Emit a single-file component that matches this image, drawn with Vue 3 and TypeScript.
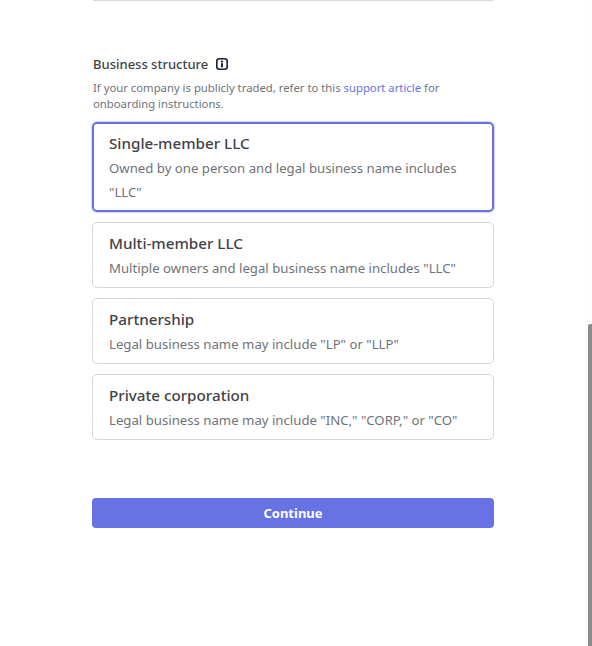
<script setup lang="ts">
interface Option { title: string; desc: string; selected?: boolean }
const options: Option[] = [
  { title: 'Single-member LLC', desc: 'Owned by one person and legal business name includes "LLC"', selected: true },
  { title: 'Multi-member LLC', desc: 'Multiple owners and legal business name includes "LLC"' },
  { title: 'Partnership', desc: 'Legal business name may include "LP" or "LLP"' },
  { title: 'Private corporation', desc: 'Legal business name may include "INC," "CORP," or "CO"' },
]
</script>

<template>
  <div class="page">
    <main class="form">
      <div class="rule"></div>
      <div class="label-row">
        <span class="label">Business structure</span>
        <svg class="info" width="12" height="12" viewBox="0 0 12 12" aria-hidden="true">
          <rect x="0.8" y="0.8" width="10.4" height="10.4" rx="2.5" fill="none" stroke="#1a1f36" stroke-width="1.6" />
          <rect x="5" y="2.6" width="2" height="1.8" fill="#1a1f36" />
          <rect x="5" y="5.2" width="2" height="4" fill="#1a1f36" />
        </svg>
      </div>
      <p class="help">If your company is publicly traded, refer to this <a class="link">support article</a> for onboarding instructions.</p>
      <div class="options">
        <div v-for="o in options" :key="o.title" class="option" :class="{ selected: o.selected }">
          <div class="title">{{ o.title }}</div>
          <div class="desc">{{ o.desc }}</div>
        </div>
      </div>
      <button class="continue" type="button">Continue</button>
    </main>
    <div class="track"><div class="thumb"></div></div>
  </div>
</template>

<style scoped>
.page {
  position: relative;
  width: 592px;
  height: 646px;
  overflow: hidden;
  background: #fff;
  font-family: "Noto Sans", "Open Sans", sans-serif;
}
.form {
  width: 402px;
  margin-left: 92px;
  display: flex;
  flex-direction: column;
}
.rule {
  height: 1px;
  margin: 0 1px;
  background: #d8d9dc;
}
.label-row {
  display: flex;
  align-items: center;
  gap: 8px;
  margin-top: 54px;
  height: 18px;
  padding-left: 1px;
}
.label {
  font-size: 13px;
  font-weight: 500;
  color: #404248;
}
.info { display: block; }
.help {
  margin: 7px 0 0;
  padding-left: 1px;
  font-size: 11.3px;
  line-height: 16px;
  color: #6f7379;
}
.link { color: #6772e5; }
.options {
  display: flex;
  flex-direction: column;
  gap: 10px;
  margin-top: 10px;
}
.option {
  border: 1px solid #d5d6d9;
  border-radius: 5px;
  padding: 8px 16px 7px;
}
.option.selected {
  border: 2px solid #6772e5;
  box-shadow: 0 0 0 1px #d3d6f7;
  padding: 7px 15px 6px;
}
.title {
  font-size: 15.2px;
  font-weight: 500;
  line-height: 24px;
  color: #3f4247;
}
.desc {
  margin-top: 1px;
  font-size: 13.2px;
  line-height: 24px;
  color: #6f7379;
}
.continue {
  margin-top: 58px;
  height: 30px;
  border: 0;
  border-radius: 4px;
  background: #6772e5;
  color: #fff;
  font: 700 13px "Noto Sans", "Open Sans", sans-serif;
}
.track {
  position: absolute;
  top: 0;
  right: 0;
  bottom: 0;
  width: 7px;
  background: #fdfdfd;
}
.thumb {
  position: absolute;
  right: 0;
  top: 324px;
  bottom: 0;
  width: 4px;
  border-radius: 2px 0 0 0;
  background: #8c8c8c;
}
</style>
